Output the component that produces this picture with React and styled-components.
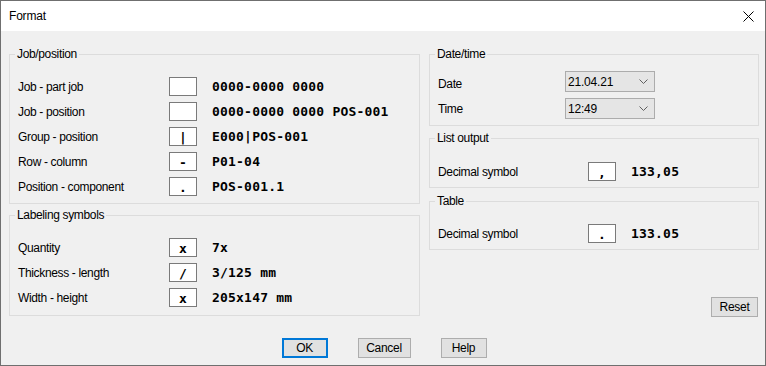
import React from "react";
import styled, { createGlobalStyle } from "styled-components";

const GlobalStyle = createGlobalStyle`
  html, body {
    margin: 0;
    padding: 0;
    background: #ffffff;
  }
  body {
    font-family: "Liberation Sans", Arial, sans-serif;
    font-size: 11px;
    color: #000000;
  }
`;

const Window = styled.div`
  width: 764px;
  height: 364px;
  border: 1px solid #6f6f6f;
  background: #f0f0f0;
  display: flex;
  flex-direction: column;
`;

const TitleBar = styled.div`
  height: 30px;
  background: #ffffff;
  display: flex;
  align-items: center;
  justify-content: space-between;
  padding: 0 11px 0 8px;
  font-size: 12px;
  letter-spacing: -0.2px;
`;

const CloseButton = styled.div`
  width: 12px;
  height: 12px;
  display: flex;
  align-items: center;
  justify-content: center;
  margin-top: 1px;
`;

const Body = styled.div`
  flex: 1;
  display: flex;
  flex-direction: column;
  padding: 16px 6px 0 8px;
`;

const Main = styled.div`
  display: flex;
  gap: 9px;
  height: 270px;
`;

const Column = styled.div`
  width: ${({ w }) => w}px;
  display: flex;
  flex-direction: column;
`;

const Group = styled.fieldset`
  margin: ${({ mt }) => mt || 0}px 0 0 0;
  padding: ${({ pt }) => pt}px 0 ${({ pb }) => pb}px 8px;
  border: 1px solid #dcdcdc;
  min-width: 0;
`;

const Legend = styled.legend`
  margin-left: -3px;
  padding: 0 2px;
  font-size: 12px;
  letter-spacing: -0.35px;
  line-height: 14px;
`;

const Rows = styled.div`
  display: flex;
  flex-direction: column;
  gap: 6px;
`;

const Row = styled.div`
  display: flex;
  align-items: center;
  height: ${({ h }) => h || 19}px;
`;

const Label = styled.span`
  width: ${({ w }) => w}px;
  flex-shrink: 0;
  font-size: 12px;
  letter-spacing: -0.35px;
  padding-top: ${({ drop }) => drop || 1}px;
`;

const SymbolBox = styled.div`
  width: 26px;
  height: 17px;
  flex-shrink: 0;
  background: #ffffff;
  border: 1px solid #7a7a7a;
  margin-right: 15px;
  font-family: "DejaVu Sans Mono", "Liberation Mono", monospace;
  font-weight: bold;
  font-size: 13px;
  line-height: 19px;
  text-align: center;
`;

const Sample = styled.span`
  font-family: "DejaVu Sans Mono", "Liberation Mono", monospace;
  font-weight: bold;
  font-size: 13px;
  letter-spacing: 0.2px;
  white-space: pre;
`;

const Select = styled.div`
  width: 90px;
  height: 21px;
  box-sizing: border-box;
  background: #e5e5e5;
  border: 1px solid #acacac;
  display: flex;
  align-items: center;
  justify-content: space-between;
  padding: 0 6px 0 2px;
  font-size: 12px;
  letter-spacing: -0.2px;
`;

const ResetRow = styled.div`
  margin-top: auto;
  display: flex;
  justify-content: flex-end;
  padding-right: 1px;
`;

const Button = styled.button`
  width: ${({ w }) => w}px;
  height: 20px;
  padding: 0;
  background: #e1e1e1;
  border: 1px solid ${({ primary }) => (primary ? "#0078d7" : "#adadad")};
  box-shadow: ${({ primary }) => (primary ? "inset 0 0 0 1px #0078d7" : "none")};
  font-family: "Liberation Sans", Arial, sans-serif;
  font-size: 12px;
  letter-spacing: -0.3px;
  color: #000000;
`;

const Footer = styled.div`
  margin-top: 21px;
  display: flex;
  justify-content: center;
  gap: 30px;
`;

const Chevron = () => (
  <svg width="9" height="5" viewBox="0 0 9 5">
    <path d="M0.5 0.5 L4.5 4.5 L8.5 0.5" fill="none" stroke="#606060" strokeWidth="1" />
  </svg>
);

const jobRows = [
  ["Job - part job", "", "0000-0000 0000"],
  ["Job - position", "", "0000-0000 0000 POS-001"],
  ["Group - position", "|", "E000|POS-001"],
  ["Row - column", "-", "P01-04"],
  ["Position - component", ".", "POS-001.1"],
];

const labelRows = [
  ["Quantity", "x", "7x"],
  ["Thickness - length", "/", "3/125 mm"],
  ["Width - height", "x", "205x147 mm"],
];

const SymbolRows = ({ rows }) => (
  <Rows>
    {rows.map(([label, symbol, sample]) => (
      <Row key={label}>
        <Label w={151}>{label}</Label>
        <SymbolBox>{symbol}</SymbolBox>
        <Sample>{sample}</Sample>
      </Row>
    ))}
  </Rows>
);

const App = () => {
  return (
    <>
      <GlobalStyle />
      <Window>
        <TitleBar>
          <span>Format</span>
          <CloseButton>
            <svg width="11" height="11" viewBox="0 0 11 11">
              <path d="M0.5 0.5 L10.5 10.5 M10.5 0.5 L0.5 10.5" stroke="#000" strokeWidth="1" />
            </svg>
          </CloseButton>
        </TitleBar>
        <Body>
          <Main>
            <Column w={411}>
              <Group pt={16} pb={7}>
                <Legend>Job/position</Legend>
                <SymbolRows rows={jobRows} />
              </Group>
              <Group mt={4} pt={16} pb={8}>
                <Legend>Labeling symbols</Legend>
                <SymbolRows rows={labelRows} />
              </Group>
            </Column>
            <Column w={330}>
              <Group pt={10} pb={6}>
                <Legend>Date/time</Legend>
                <Rows>
                  <Row h={21}>
                    <Label w={127} drop={4}>Date</Label>
                    <Select>
                      <span>21.04.21</span>
                      <Chevron />
                    </Select>
                  </Row>
                  <Row h={21}>
                    <Label w={127}>Time</Label>
                    <Select>
                      <span>12:49</span>
                      <Chevron />
                    </Select>
                  </Row>
                </Rows>
              </Group>
              <Group mt={5} pt={17} pb={6}>
                <Legend>List output</Legend>
                <Row>
                  <Label w={150}>Decimal symbol</Label>
                  <SymbolBox>,</SymbolBox>
                  <Sample>133,05</Sample>
                </Row>
              </Group>
              <Group mt={6} pt={16} pb={6}>
                <Legend>Table</Legend>
                <Row>
                  <Label w={150}>Decimal symbol</Label>
                  <SymbolBox>.</SymbolBox>
                  <Sample>133.05</Sample>
                </Row>
              </Group>
              <ResetRow>
                <Button w={47}>Reset</Button>
              </ResetRow>
            </Column>
          </Main>
          <Footer>
            <Button w={46} primary>OK</Button>
            <Button w={53}>Cancel</Button>
            <Button w={46}>Help</Button>
          </Footer>
        </Body>
      </Window>
    </>
  );
};

export default App;
